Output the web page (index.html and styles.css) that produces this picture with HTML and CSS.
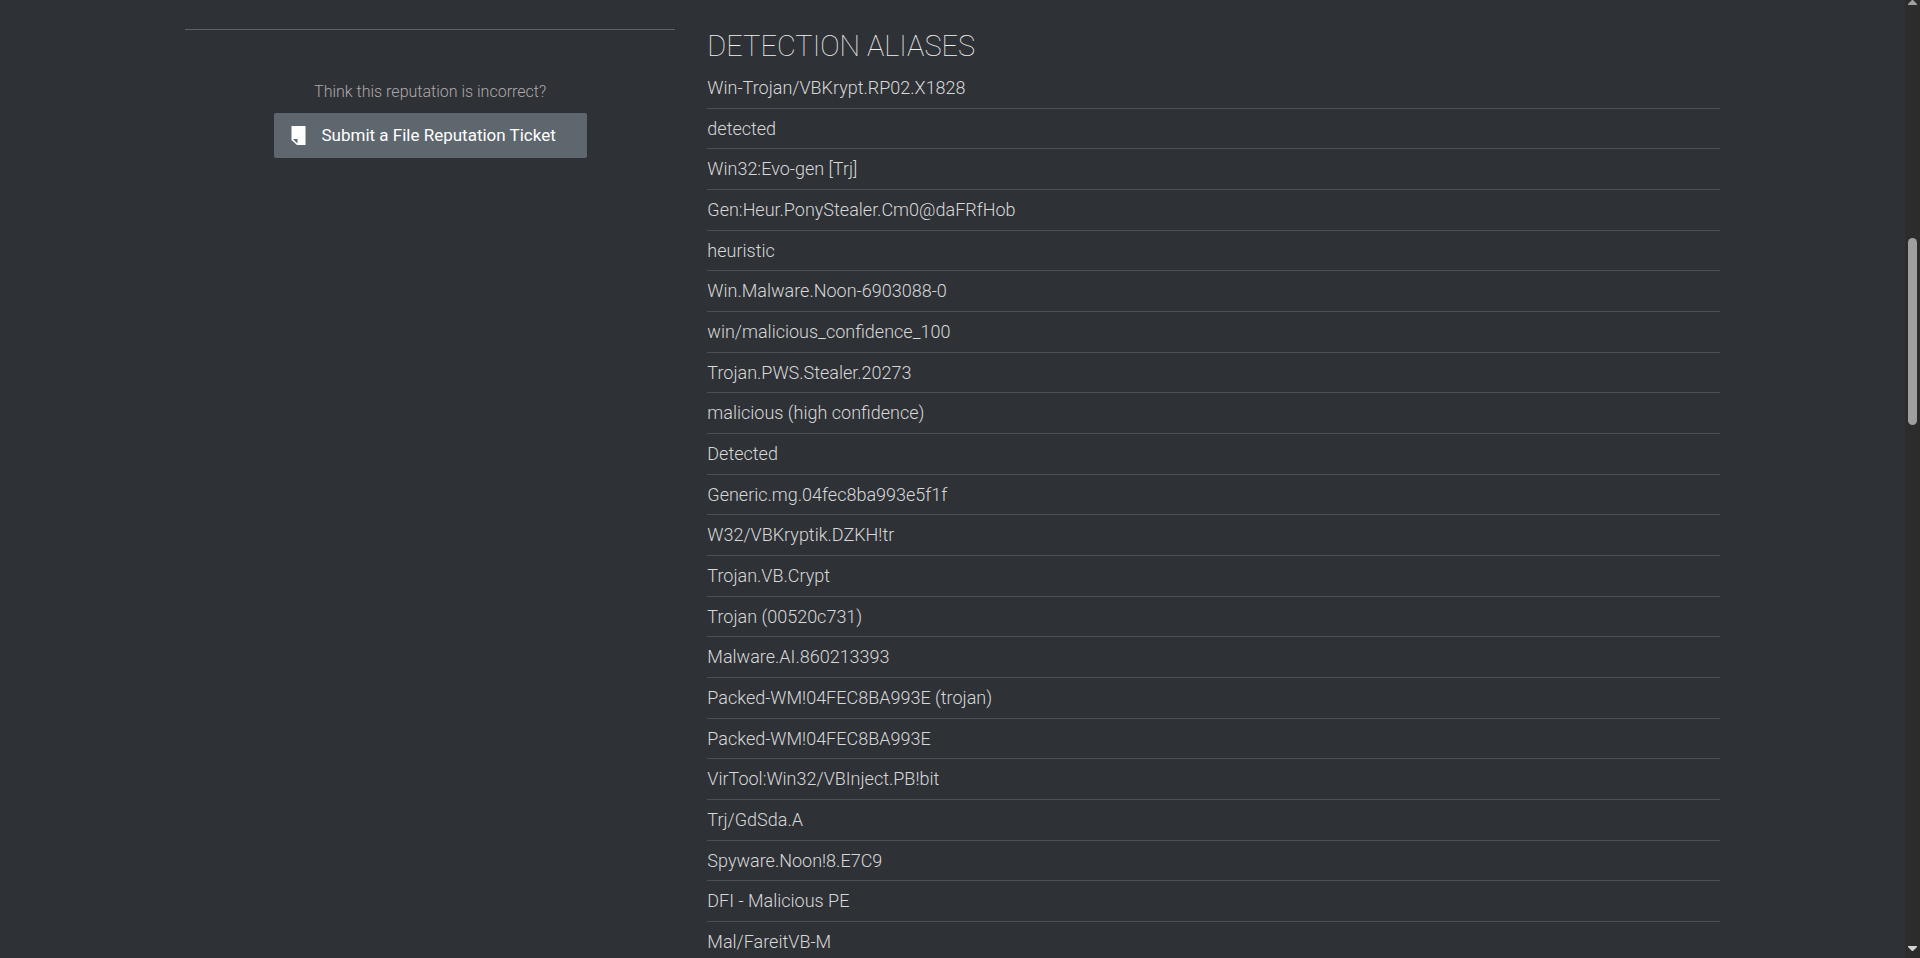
FILE: index.html
```html
<!DOCTYPE html>
<html lang="en">
<head>
<meta charset="utf-8">
<title>File Reputation</title>
<link rel="stylesheet" href="styles.css">
</head>
<body>
<div class="page">
  <main class="container">
    <section class="reputation">
      <hr class="divider">
      <p class="question">Think this reputation is incorrect?</p>
      <button class="ticket" type="button">
        <svg class="ticket-icon" viewBox="0 0 15 19" aria-hidden="true">
          <path fill="#fff" d="M0.500 0H14.500V19H6L0.500 14Z"/>
          <path fill="#5e666e" d="M2 13H6.500V17.500Z"/>
        </svg>
        <span>Submit a File Reputation Ticket</span>
      </button>
    </section>
    <section class="aliases">
      <h2 class="title">DETECTION ALIASES</h2>
      <ul class="list">
        <li>Win-Trojan/VBKrypt.RP02.X1828</li>
        <li>detected</li>
        <li>Win32:Evo-gen [Trj]</li>
        <li>Gen:Heur.PonyStealer.Cm0@daFRfHob</li>
        <li>heuristic</li>
        <li>Win.Malware.Noon-6903088-0</li>
        <li>win/malicious_confidence_100</li>
        <li>Trojan.PWS.Stealer.20273</li>
        <li>malicious (high confidence)</li>
        <li>Detected</li>
        <li>Generic.mg.04fec8ba993e5f1f</li>
        <li>W32/VBKryptik.DZKH!tr</li>
        <li>Trojan.VB.Crypt</li>
        <li>Trojan (00520c731)</li>
        <li>Malware.AI.860213393</li>
        <li>Packed-WM!04FEC8BA993E (trojan)</li>
        <li>Packed-WM!04FEC8BA993E</li>
        <li>VirTool:Win32/VBInject.PB!bit</li>
        <li>Trj/GdSda.A</li>
        <li>Spyware.Noon!8.E7C9</li>
        <li>DFI - Malicious PE</li>
        <li>Mal/FareitVB-M</li>
      </ul>
    </section>
  </main>
  <div class="scrollbar" aria-hidden="true">
    <svg class="arrow" viewBox="0 0 9 5"><path fill="#a0a0a0" d="M4 0H5L9 4V5H0V4Z"/></svg>
    <div class="track"><div class="thumb"></div></div>
    <svg class="arrow" viewBox="0 0 9 5"><path fill="#d3d3d3" d="M0 0H9V1L5 5H4L0 1Z"/></svg>
  </div>
</div>
</body>
</html>
```
FILE: styles.css
```css
* {
  box-sizing: border-box;
}

body {
  margin: 0;
  background: #2e3136;
  color: #d8d8d8;
  font-family: Roboto, "Liberation Sans", sans-serif;
  font-weight: 300;
}

.page {
  display: flex;
  height: 100vh;
  overflow: hidden;
}

.container {
  display: grid;
  flex: 1;
  grid-template-columns: minmax(0, 1fr) minmax(0, 2fr);
  align-items: start;
  max-width: 1567px;
  margin: 0 auto;
}

.reputation {
  display: flex;
  flex-direction: column;
  align-items: center;
  padding: 29px 16px 0;
}

.divider {
  width: 100%;
  height: 1px;
  margin: 0 0 49px;
  border: 0;
  background: #5c626a;
}

.question {
  margin: 0 0 8px;
  color: #b0a9a9;
  font-size: 16px;
  line-height: 26px;
}

.ticket {
  display: flex;
  align-items: center;
  gap: 16px;
  height: 45px;
  padding: 0 31px 1px 17px;
  border: 0;
  border-radius: 2px;
  background: #5e666e;
  color: #fff;
  font: 400 17px/24px Roboto, "Liberation Sans", sans-serif;
}

.ticket-icon {
  width: 15px;
  height: 19px;
}

.aliases {
  padding: 26px 16px 0;
}

.title {
  margin: 0 0 2px;
  color: #f0f0f0;
  font-size: 29px;
  font-weight: 100;
  line-height: 40px;
}

.list {
  margin: 0;
  padding: 0;
  list-style: none;
}

.list li {
  padding: 8px 0;
  border-bottom: 1px solid #4c5056;
  font-size: 18px;
  line-height: 24px;
}

.list li:nth-child(3n + 2) {
  line-height: 23px;
}

.scrollbar {
  display: flex;
  flex-direction: column;
  align-items: center;
  width: 15px;
  padding-bottom: 7px;
  background: #2c2c2c;
}

.arrow {
  width: 9px;
  height: 5px;
}

.track {
  flex: 1;
  padding-top: 233px;
}

.thumb {
  width: 9px;
  height: 20%;
  min-height: 187px;
  border-radius: 5px;
  background: #9f9f9f;
}
```
